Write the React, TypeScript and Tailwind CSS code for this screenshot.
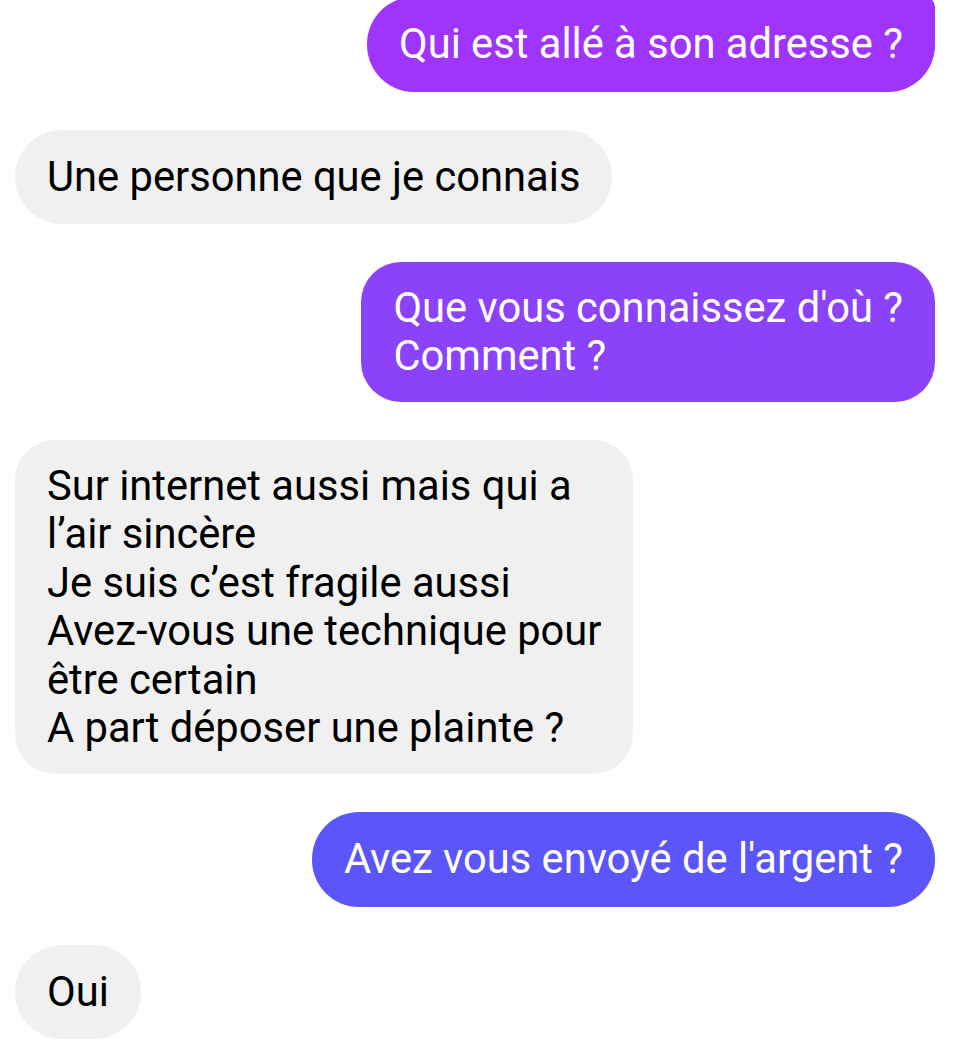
const messages = [
  { from: "me", lines: ["Qui est allé à son adresse ?"], bg: "bg-[#9f35fd]", first: true },
  { from: "them", lines: ["Une personne que je connais"] },
  { from: "me", lines: ["Que vous connaissez d'où ?", "Comment ?"], bg: "bg-[#8a42fa]" },
  {
    from: "them",
    lines: [
      "Sur internet aussi mais qui a",
      "l’air sincère",
      "Je suis c’est fragile aussi",
      "Avez-vous une technique pour",
      "être certain",
      "A part déposer une plainte ?",
    ],
  },
  { from: "me", lines: ["Avez vous envoyé de l'argent ?"], bg: "bg-[#5c55fb]" },
  { from: "them", lines: ["Oui"] },
];

export default function App() {
  return (
    <main className="flex h-[1057px] flex-col gap-[38px] overflow-hidden bg-white pl-[15px] pr-[21px] font-['Roboto',sans-serif] text-[41.7px] leading-[48.5px]">
      {messages.map((m, i) => {
        const multi = m.lines.length > 1;
        const radius = multi ? "rounded-[40px]" : "rounded-[47px]";
        const mine = m.from === "me";
        return (
          <div key={i} className={mine ? "flex justify-end" : "flex justify-start"}>
            <div
              className={`${radius} ${
                mine ? `${m.bg} text-white` : "bg-[#f0f0f0] text-black"
              } ${m.first ? "-mt-[3px] rounded-tr-[10px]" : ""} ${
                multi ? "py-[21.5px]" : "py-[23px]"
              } px-[32px]`}
            >
              {m.lines.map((l) => (
                <div key={l} className="whitespace-nowrap">
                  {l}
                </div>
              ))}
            </div>
          </div>
        );
      })}
    </main>
  );
}
